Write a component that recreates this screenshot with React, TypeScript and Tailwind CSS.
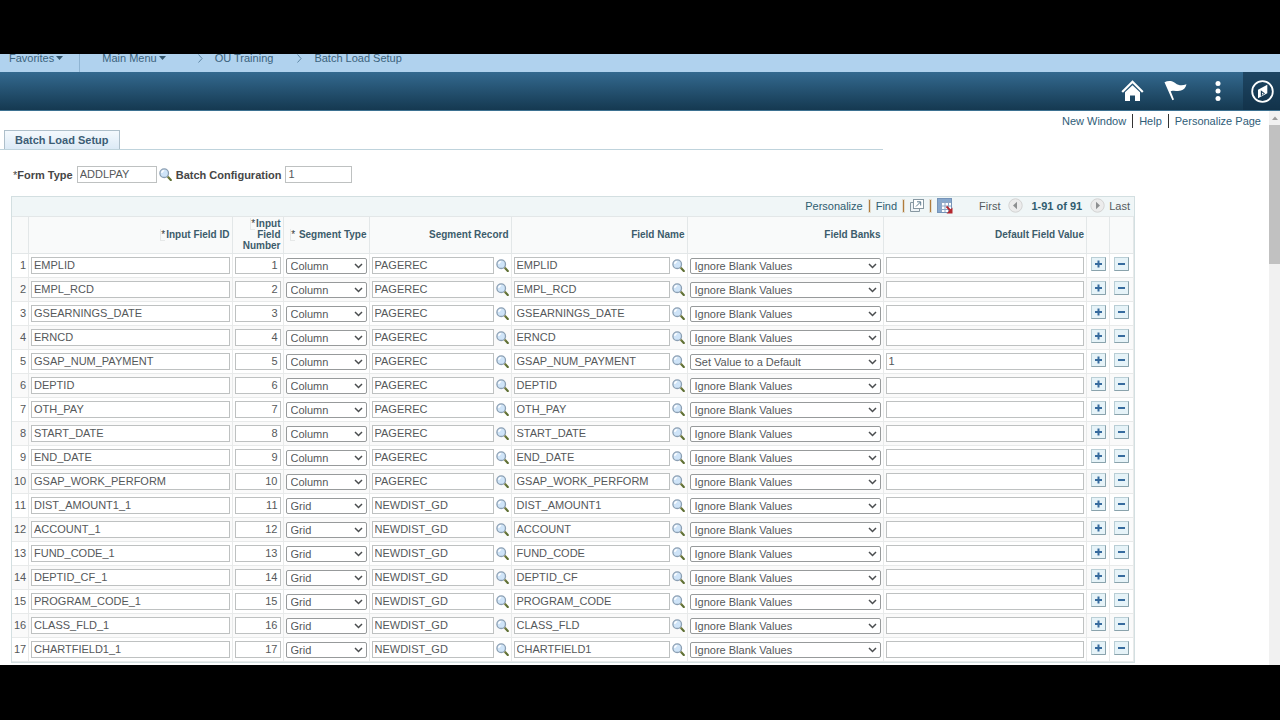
import { useId } from "react";

type Row = {
  id: string;
  segment: "Column" | "Grid";
  record: string;
  field: string;
  banks?: string;
  value?: string;
};

const rows: Row[] = [
  { id: "EMPLID", segment: "Column", record: "PAGEREC", field: "EMPLID" },
  { id: "EMPL_RCD", segment: "Column", record: "PAGEREC", field: "EMPL_RCD" },
  { id: "GSEARNINGS_DATE", segment: "Column", record: "PAGEREC", field: "GSEARNINGS_DATE" },
  { id: "ERNCD", segment: "Column", record: "PAGEREC", field: "ERNCD" },
  {
    id: "GSAP_NUM_PAYMENT",
    segment: "Column",
    record: "PAGEREC",
    field: "GSAP_NUM_PAYMENT",
    banks: "Set Value to a Default",
    value: "1",
  },
  { id: "DEPTID", segment: "Column", record: "PAGEREC", field: "DEPTID" },
  { id: "OTH_PAY", segment: "Column", record: "PAGEREC", field: "OTH_PAY" },
  { id: "START_DATE", segment: "Column", record: "PAGEREC", field: "START_DATE" },
  { id: "END_DATE", segment: "Column", record: "PAGEREC", field: "END_DATE" },
  { id: "GSAP_WORK_PERFORM", segment: "Column", record: "PAGEREC", field: "GSAP_WORK_PERFORM" },
  { id: "DIST_AMOUNT1_1", segment: "Grid", record: "NEWDIST_GD", field: "DIST_AMOUNT1" },
  { id: "ACCOUNT_1", segment: "Grid", record: "NEWDIST_GD", field: "ACCOUNT" },
  { id: "FUND_CODE_1", segment: "Grid", record: "NEWDIST_GD", field: "FUND_CODE" },
  { id: "DEPTID_CF_1", segment: "Grid", record: "NEWDIST_GD", field: "DEPTID_CF" },
  { id: "PROGRAM_CODE_1", segment: "Grid", record: "NEWDIST_GD", field: "PROGRAM_CODE" },
  { id: "CLASS_FLD_1", segment: "Grid", record: "NEWDIST_GD", field: "CLASS_FLD" },
  { id: "CHARTFIELD1_1", segment: "Grid", record: "NEWDIST_GD", field: "CHARTFIELD1" },
];

const inputClass =
  "block h-[17px] w-full min-w-0 border border-[#bec1c1] bg-white px-0.5 pb-px text-[11px] leading-4 text-[#55585a] outline-none";

function Caret() {
  return (
    <svg width="7" height="4" viewBox="0 0 7 4" aria-hidden="true">
      <path d="M0 0h7L3.5 4z" fill="#33566d" />
    </svg>
  );
}

function Separator() {
  return (
    <svg width="5" height="9" viewBox="0 0 5 9" className="mr-3" aria-hidden="true">
      <path d="M.5.5l3.6 4-3.6 4" fill="none" stroke="#5f87a5" />
    </svg>
  );
}

function LookupButton({ label }: { label: string }) {
  return (
    <button type="button" aria-label={label} className="shrink-0">
      <svg width="13" height="13" viewBox="0 0 13 13" className="block">
        <path d="M8.6 8.6l3.2 3.3" stroke="#5f7034" strokeWidth="2.2" strokeLinecap="round" />
        <path d="M8 8l1.4 1.4" stroke="#a39c62" strokeWidth="1.5" />
        <circle cx="5.2" cy="5.2" r="4.3" fill="#cfe4f8" stroke="#8b9fb3" strokeWidth="1.3" />
        <path d="M2.8 5A2.4 2.4 0 015.200 2.700" fill="none" stroke="#fff" strokeWidth="1.300" />
      </svg>
    </button>
  );
}

function RowButton({ kind, row }: { kind: "add" | "delete"; row: number }) {
  return (
    <button
      type="button"
      aria-label={kind === "add" ? `Add row after ${row}` : `Delete row ${row}`}
      className="mx-auto block"
    >
      <svg width="15" height="14" viewBox="0 0 15 14" className="block">
        <rect x=".5" y=".5" width="14" height="13" fill="#e6f3f8" stroke="#b9ced5" />
        <path d="M.5 13.5h14v-13" fill="none" stroke="#8aa3ac" />
        <path d="M4 7h7" stroke="#366b9e" strokeWidth="2" />
        {kind === "add" && <path d="M7.5 3.5v7" stroke="#366b9e" strokeWidth="2" />}
      </svg>
    </button>
  );
}

function Select({ label, value, options }: { label: string; value: string; options: string[] }) {
  return (
    <div className="grid items-center">
      <select
        aria-label={label}
        defaultValue={value}
        className="col-start-1 row-start-1 h-4 w-full appearance-none rounded-xs border border-[#979a9b] bg-white px-1 text-[11px] leading-3 text-[#55585a] outline-none"
      >
        {options.map((option) => (
          <option key={option}>{option}</option>
        ))}
      </select>
      <svg
        width="9"
        height="6"
        viewBox="0 0 9 6"
        className="pointer-events-none col-start-1 row-start-1 mr-1 justify-self-end"
        aria-hidden="true"
      >
        <path d="M1 1l3.500 3.500L8 1" fill="none" stroke="#4a4d4f" strokeWidth="1.500" />
      </svg>
    </div>
  );
}

function PageArrow({ label, flip }: { label: string; flip?: boolean }) {
  return (
    <button type="button" aria-label={label}>
      <svg width="15" height="15" viewBox="0 0 15 15" className="block">
        <circle cx="7.5" cy="7.5" r="6.7" fill="#ececec" stroke="#d3d3d3" />
        <path d={flip ? "M6 3.800l4 3.700-4 3.700z" : "M9 3.800L5 7.500l4 3.700z"} fill="#8d8f90" />
      </svg>
    </button>
  );
}

function Required() {
  return (
    <span className="mr-px border-b border-l border-[#e6e8e8] font-normal text-[#3a3a3a]">*</span>
  );
}

function Pipe() {
  return <span className="h-3 w-px bg-[#b07c3c] outline outline-[#b07c3c]/20" />;
}

function Breadcrumbs() {
  return (
    <nav className="flex h-[18px] shrink-0 items-end overflow-hidden bg-[#b0d2ee] pl-[9px] text-[11px] leading-4 text-[#3c637d]">
      <div className="flex h-full items-end border-r border-[#8fb4d2] pr-4 pb-1.5">
        <button type="button" className="flex items-center gap-0.5 leading-4">
          Favorites <Caret />
        </button>
      </div>
      <div className="flex items-center gap-8 pb-1.5 pl-[22px]">
        <button type="button" className="flex items-center gap-0.5 leading-4">
          Main Menu <Caret />
        </button>
        <a href="#training" className="flex items-center">
          <Separator />
          OU Training
        </a>
      </div>
      <a href="#setup" className="ml-6 flex items-center pb-1.5">
        <Separator />
        Batch Load Setup
      </a>
    </nav>
  );
}

function Banner() {
  return (
    <header className="flex h-[39px] shrink-0 items-center justify-end border-b border-[#3d7191] bg-linear-to-b from-[#346a90] to-[#153951]">
      <div className="flex items-center gap-5">
        <button type="button" aria-label="Home">
          <svg width="23" height="22" viewBox="0 0 23 22" className="block" fill="#fff">
            <path d="M1.200 12L11.500 1.800 21.800 12" fill="none" stroke="#fff" strokeWidth="2.200" />
            <path d="M4 12.200l7.500-7 7.500 7V21h-5v-5.500H9V21H4z" />
          </svg>
        </button>
        <button type="button" aria-label="Notifications">
          <svg width="23" height="22" viewBox="0 0 23 22" className="block" fill="#fff">
            <path d="M.5 2.200C4 .6 8 .6 11.500 3.200 14.500 5.500 18 6 22.500 4.200c-.8 3.500-3 6-6.500 6.600-3.500.6-5.800-.9-9.300.4l3.300 8.400-1.600.6z" />
          </svg>
        </button>
        <button type="button" aria-label="Actions" className="px-2">
          <svg width="6" height="20" viewBox="0 0 6 20" className="block" fill="#fff">
            <circle cx="3" cy="2.500" r="2.500" />
            <circle cx="3" cy="10" r="2.500" />
            <circle cx="3" cy="17.500" r="2.500" />
          </svg>
        </button>
      </div>
      <div className="ml-3.5 flex h-full items-center bg-[#112f46]/60 pr-1.5 pl-2">
        <button type="button" aria-label="NavBar">
          <svg width="23" height="23" viewBox="0 0 23 23" className="block">
            <circle cx="11.500" cy="11.500" r="10.300" fill="none" stroke="#fff" strokeWidth="1.800" />
            <path d="M16.300 4.800v8.400l-9.300 5V9.800z" fill="#fff" />
            <path d="M9.800 10.300l4.200 3.200-4.200 2.700z" fill="#173c57" />
            <path d="M11 12.500l1.700 1.300L11 14.700z" fill="#fff" />
          </svg>
        </button>
      </div>
    </header>
  );
}

function GridToolbar() {
  return (
    <div className="flex h-[19px] items-center justify-end bg-[#f0f6f7] pr-1 pb-0.5 text-[11px] leading-4 text-[#2f5d70]">
      <div className="flex items-center gap-1.5">
        <a href="#personalize">Personalize</a>
        <Pipe />
        <a href="#find">Find</a>
        <Pipe />
        <button type="button" aria-label="View in new window">
          <svg width="14" height="13" viewBox="0 0 14 13" className="block">
            <path d="M3.500 3.500H.5v9h9v-3" fill="#eef3f6" stroke="#8797a1" />
            <rect x="3.500" y=".5" width="10" height="9" fill="#fff" stroke="#8797a1" />
            <path d="M6 7.500l4.500-4.500M7 2.800h3.700v3.700" fill="none" stroke="#5d7c8f" />
          </svg>
        </button>
        <Pipe />
        <button type="button" aria-label="Download to Excel">
          <svg width="16" height="16" viewBox="0 0 16 16" className="block">
            <rect x=".5" y=".5" width="14" height="14" fill="#fff" stroke="#7694b8" />
            <path d="M1 1h13v3H1zM1 4h3v10H1z" fill="#86a8cf" />
            <path d="M1 4.500h13M1 8h13M1 11.500h13M4.500 1v13M8 1v13M11.500 1v13" stroke="#8ea6c4" />
            <path d="M9.500 8.500l4 4" stroke="#b3272e" strokeWidth="1.800" />
            <path d="M15.500 9.500v6h-6z" fill="#b3272e" />
          </svg>
        </button>
      </div>
      <div className="ml-[26px] flex items-center gap-2">
        <span className="text-[#555b5e]">First</span>
        <PageArrow label="Previous rows" />
        <span className="font-bold">1-91 of 91</span>
        <span className="flex items-center gap-1 text-[#555b5e]">
          <PageArrow label="Next rows" flip />
          Last
        </span>
      </div>
    </div>
  );
}

function FieldRow({ row, number }: { row: Row; number: number }) {
  return (
    <tr className="h-6 odd:bg-white even:bg-[#fafafa] [&>td]:border-r [&>td]:border-b [&>td]:border-[#e8eaea] [&>td]:px-0.5 [&>td]:align-middle">
      <td className="pb-0.5 text-right">{number}</td>
      <td>
        <input aria-label={`Input Field ID ${number}`} className={inputClass} defaultValue={row.id} />
      </td>
      <td>
        <input
          aria-label={`Input Field Number ${number}`}
          className={`${inputClass} text-right`}
          defaultValue={number}
        />
      </td>
      <td>
        <Select label={`Segment Type ${number}`} value={row.segment} options={["Column", "Grid"]} />
      </td>
      <td>
        <div className="flex items-center gap-0.5">
          <input aria-label={`Segment Record ${number}`} className={inputClass} defaultValue={row.record} />
          <LookupButton label={`Look up Segment Record ${number}`} />
        </div>
      </td>
      <td>
        <div className="flex items-center gap-0.5">
          <input aria-label={`Field Name ${number}`} className={inputClass} defaultValue={row.field} />
          <LookupButton label={`Look up Field Name ${number}`} />
        </div>
      </td>
      <td>
        <Select
          label={`Field Banks ${number}`}
          value={row.banks ?? "Ignore Blank Values"}
          options={["Ignore Blank Values", "Set Value to a Default"]}
        />
      </td>
      <td>
        <input
          aria-label={`Default Field Value ${number}`}
          className={inputClass}
          defaultValue={row.value ?? ""}
        />
      </td>
      <td className="pb-1">
        <RowButton kind="add" row={number} />
      </td>
      <td className="pb-1">
        <RowButton kind="delete" row={number} />
      </td>
    </tr>
  );
}

function FieldTable() {
  return (
    <section className="min-w-[1124px] border border-[#d3dfe1]">
      <GridToolbar />
      <table className="w-full table-fixed border-separate border-spacing-0 text-[11px] leading-4 text-[#55585a]">
        <colgroup>
          <col className="w-[17px]" />
          <col />
          <col className="w-[51px]" />
          <col className="w-[86px]" />
          <col className="w-[142px]" />
          <col className="w-[176px]" />
          <col className="w-[196px]" />
          <col />
          <col className="w-[23px]" />
          <col className="w-[24px]" />
        </colgroup>
        <thead>
          <tr className="h-[38px] bg-[#f9fafa] text-right text-[10px] leading-[11px] text-[#3c5c6b] [&>th]:border-t [&>th]:border-r [&>th]:border-b [&>th]:border-[#e3e7e8] [&>th]:px-0.5 [&>th]:pb-0.5 [&>th]:font-bold">
            <th aria-label="Row" />
            <th>
              <Required />
              Input Field ID
            </th>
            <th>
              <Required />
              <span>Input</span>
              <span className="block">Field</span>
              <span className="block">Number</span>
            </th>
            <th>
              <Required /> Segment Type
            </th>
            <th>Segment Record</th>
            <th>Field Name</th>
            <th>Field Banks</th>
            <th>Default Field Value</th>
            <th aria-label="Add" />
            <th aria-label="Delete" />
          </tr>
        </thead>
        <tbody>
          {rows.map((row, index) => (
            <FieldRow key={row.id} row={row} number={index + 1} />
          ))}
        </tbody>
      </table>
    </section>
  );
}

export default function App() {
  const formTypeId = useId();
  const batchId = useId();

  return (
    <div className="h-screen bg-black pt-[54px] pb-[55px] font-['Liberation_Sans',Arial,sans-serif] text-[11px] leading-4">
      <div className="flex h-full flex-col overflow-hidden bg-white">
        <Breadcrumbs />
        <Banner />
        <div className="flex min-h-0 flex-1">
          <main className="min-w-0 flex-1 overflow-hidden">
            <div className="flex items-center justify-end gap-1.5 pt-0.5 pr-2 text-[#2f5d78]">
              <a href="#new-window">New Window</a>
              <span className="h-3.5 w-px bg-[#333]" />
              <a href="#help">Help</a>
              <span className="h-3.5 w-px bg-[#333]" />
              <a href="#personalize-page">Personalize Page</a>
            </div>
            <div className="mr-[386px] flex border-b border-[#bfd3dc] pt-px pl-1">
              <button
                type="button"
                className="border border-b-0 border-[#aebfca] bg-linear-to-b from-[#f4f9fd] to-[#dceaf6] px-2.5 pt-px pb-px font-bold text-[#3c5d75]"
              >
                Batch Load Setup
              </button>
            </div>
            <form className="flex items-center pt-4 pb-[13px] pl-[13px] font-bold text-[#464646]">
              <label htmlFor={formTypeId}>
                <span className="font-normal">*</span>Form Type
              </label>
              <div className="mr-1 ml-1 flex w-[95px] items-center gap-0.5">
                <input id={formTypeId} className={`${inputClass} font-normal`} defaultValue="ADDLPAY" />
                <LookupButton label="Look up Form Type" />
              </div>
              <label htmlFor={batchId}>Batch Configuration</label>
              <div className="ml-1 w-[67px]">
                <input id={batchId} className={`${inputClass} font-normal`} defaultValue="1" />
              </div>
            </form>
            <div className="pr-[134px] pl-[11px]">
              <FieldTable />
            </div>
          </main>
          <div className="flex w-[11px] shrink-0 flex-col bg-[#f1f1f1]" aria-hidden="true">
            <svg width="11" height="14" viewBox="0 0 11 14">
              <path d="M3 9l3-3.500L9 9z" fill="#9b9b9b" />
            </svg>
            <div className="h-1/4 bg-[#c1c1c1]" />
          </div>
        </div>
      </div>
    </div>
  );
}
